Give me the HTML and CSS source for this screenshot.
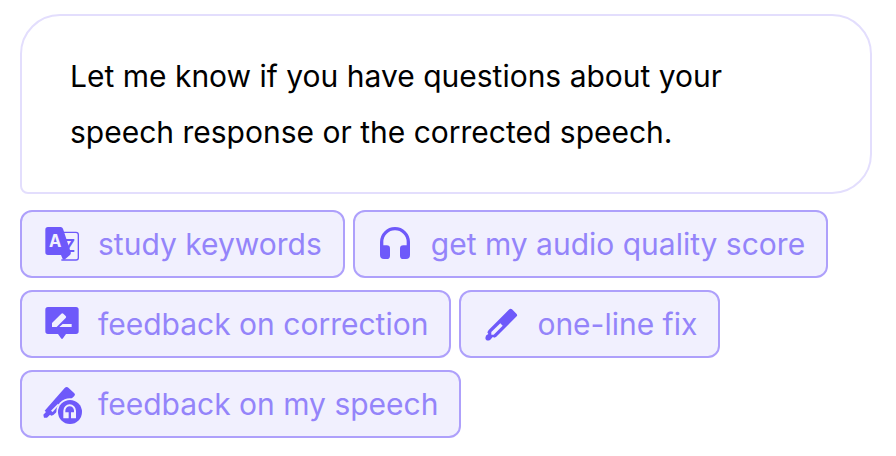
FILE: index.html
```html
<!DOCTYPE html>
<html lang="en">
<head>
<meta charset="utf-8">
<meta name="viewport" content="width=device-width, initial-scale=1">
<title>Speech feedback</title>
<link rel="stylesheet" href="styles.css">
</head>
<body>
<main class="chat">
  <p class="bubble">Let me know if you have questions about your speech response or the corrected speech.</p>
  <div class="actions">
    <button class="action" type="button">
      <svg class="icon" viewBox="18 18 120 120" aria-hidden="true">
        <path class="line" d="M82 43H120Q127 43 127 50V119Q127 126 120 126H76"/>
        <text class="letter-z" x="84" y="103">Z</text>
        <path d="M36 27H74Q79 27 81 32L104 102Q106 108 101 112L88 123Q83 127 80 123L75 111H36Q28 111 28 103V35Q28 27 36 27Z"/>
        <text class="letter-a" x="39" y="87">A</text>
      </svg>
      <span class="label">study keywords</span>
    </button>
    <button class="action" type="button">
      <svg class="icon" viewBox="18 18 120 120" aria-hidden="true">
        <path d="M78 27A45 45 0 0 0 33 72V111Q33 123 45 123H53Q63 123 63 113V92Q63 82 53 82H43V72A35 35 0 0 1 113 72V82H103Q93 82 93 92V113Q93 123 103 123H111Q123 123 123 111V72A45 45 0 0 0 78 27Z"/>
      </svg>
      <span class="label">get my audio quality score</span>
    </button>
    <button class="action" type="button">
      <svg class="icon" viewBox="18 18 120 120" aria-hidden="true">
        <path d="M36 27H120Q128 27 128 35V100Q128 108 120 108H90L81 121Q78 125 75 121L66 108H36Q28 108 28 100V35Q28 27 36 27Z"/>
        <path class="cut" d="M48 87V75L76 47Q79 44 82 47L89 54Q92 57 89 60L62 87ZM70 87L80 78H107V87Z"/>
      </svg>
      <span class="label">feedback on correction</span>
    </button>
    <button class="action" type="button">
      <svg class="icon" viewBox="18 18 120 120" aria-hidden="true">
        <path d="M103 34Q107 31 111 34L125 48Q128 52 125 55L63 117L57 119L54 116L46 125Q38 130 33 125Q29 120 34 112L40 108L37 103L41 96Z"/>
        <path class="cut" d="M49 102L76 76L83 83L56 110H49Z"/>
      </svg>
      <span class="label">one-line fix</span>
    </button>
    <button class="action" type="button">
      <svg class="icon" viewBox="18 18 120 120" aria-hidden="true">
        <path d="M86 30Q92 24 98 30L115 46Q119 50 115 54L52 111L46 113L42 110L33 119H24L22 110L30 102L26 98Z"/>
        <path class="cut" d="M45 98L66 77L69 80L50 102Z"/>
        <circle class="cut" cx="102" cy="102" r="41"/>
        <circle cx="102" cy="102" r="36"/>
        <path class="cut" d="M101 79A19 19 0 0 0 82 98V121H98V103H88V98A13 13 0 0 1 114 98V103H105V121H120V98A19 19 0 0 0 101 79Z"/>
      </svg>
      <span class="label">feedback on my speech</span>
    </button>
  </div>
</main>
</body>
</html>
```

FILE: styles.css
```css
* {
  box-sizing: border-box;
}

body {
  margin: 0;
  background: #fff;
  color: #000;
  font-family: Inter, "Liberation Sans", sans-serif;
}

.chat {
  padding: 14px 24px 18px 20px;
}

.bubble {
  margin: 0 0 16px;
  padding: 32px 96px 32px 48px;
  border: 2px solid #e3defd;
  border-radius: 40px 40px 40px 8px;
  font-size: 30px;
  line-height: 56px;
}

.actions {
  display: flex;
  flex-wrap: wrap;
  gap: 12px 8px;
}

.action {
  display: flex;
  align-items: center;
  gap: 16px;
  padding: 12px 21px 12px 20px;
  border: 2px solid #aea0fb;
  border-radius: 12px;
  background: #f1f0fe;
  color: #9484fa;
  font-family: inherit;
  font-size: 30px;
  line-height: 40px;
  cursor: pointer;
}

.icon {
  flex: none;
  width: 40px;
  height: 40px;
  fill: #6e59fa;
  overflow: visible;
}

.line {
  fill: none;
  stroke: #6e59fa;
  stroke-width: 4;
}

.cut {
  fill: #f1f0fe;
}

.letter-a,
.letter-z {
  font-size: 50px;
  font-weight: 700;
}

.letter-a {
  fill: #f1f0fe;
}
```
